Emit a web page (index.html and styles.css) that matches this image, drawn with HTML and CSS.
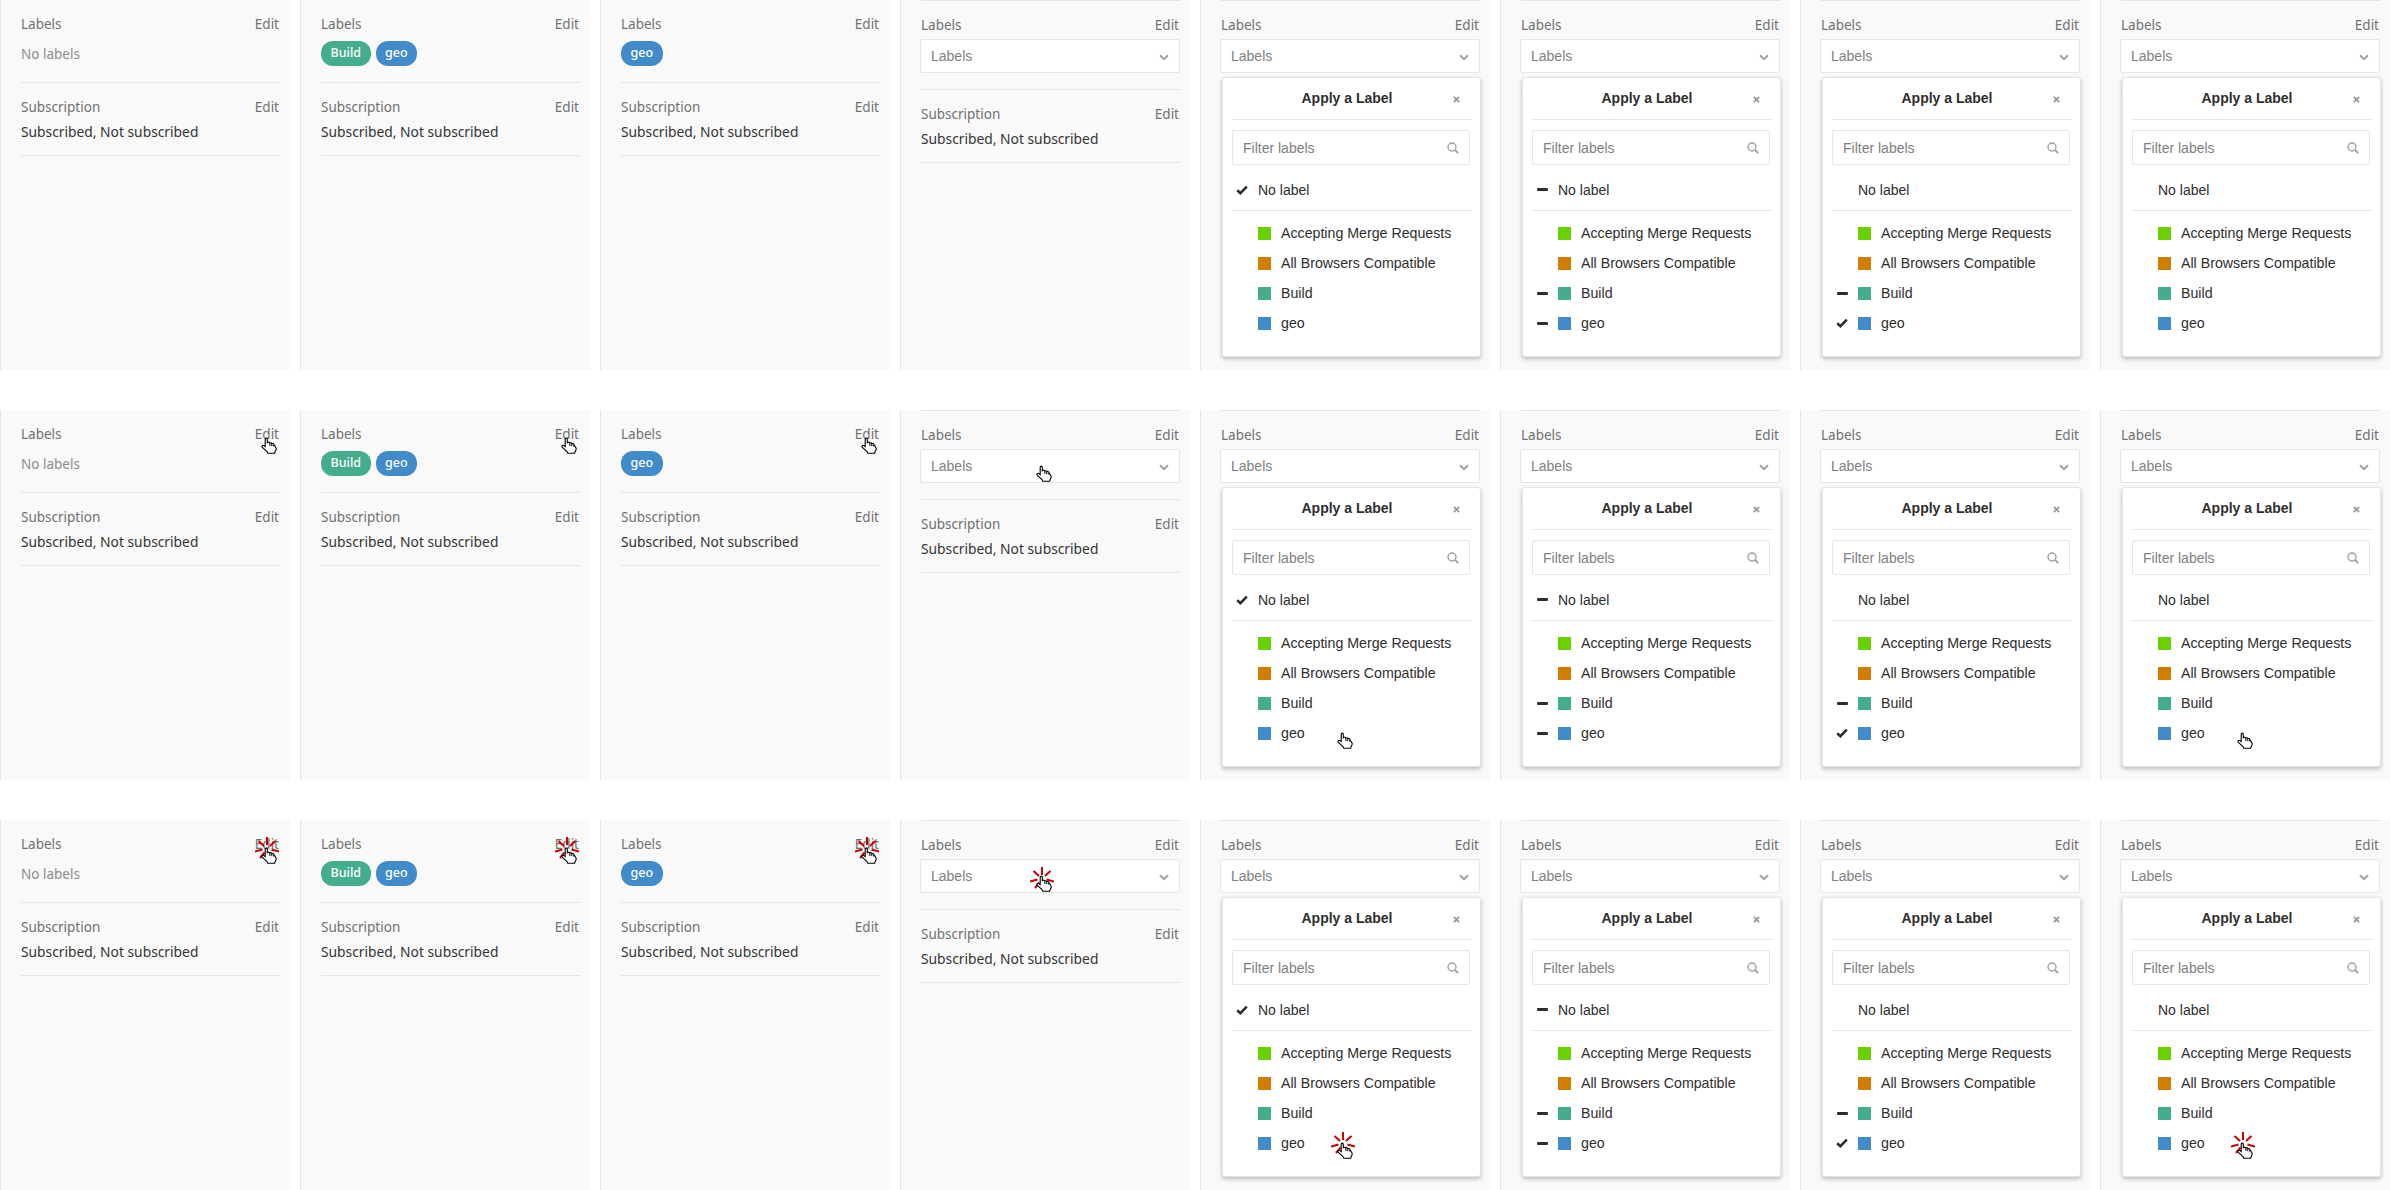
FILE: index.html
```html
<!DOCTYPE html>
<html>
<head>
    <title>Labels sidebar</title>
    <link rel="stylesheet" href="styles.css">
</head>
<body>
    <svg class="defs" width="0" height="0">
        <symbol id="hand" viewBox="0 0 16 17">
            <path d="M4.2 8V2.2C4.2 .7 6.3 .7 6.3 2.2V5.8L7 5.4C7.8 4.9 8.6 5.2 8.9 6C9.6 5.5 10.5 5.8 10.8 6.6C11.6 6.2 12.5 6.6 12.9 7.5L14.9 10.8C15.4 11.9 15.2 13 14.5 13.8L13.6 16.3H6.8L6 14.6L1.4 10.4C.3 9.2 1.8 7.7 3 8.6L4.2 9.6Z" fill="#fff" stroke="#000" stroke-width="1.1"/>
            <path d="M8.9 6.2V9M10.8 6.8V9.2M12.8 7.8V9.6" fill="none" stroke="#000" stroke-width="1"/>
        </symbol>
        <symbol id="burst" viewBox="0 0 24 24">
            <path d="M12 0V8M3.5 4L9 9M20.5 4L15 9M0 14.5L7.5 12.5M24 14.5L16.5 12.5M5 21L9.5 15.5M19 21L14.5 15.5" fill="none" stroke="#cc0000" stroke-width="2"/>
        </symbol>
        <symbol id="check" viewBox="0 0 12 10">
            <path d="M1.2 5.2L4.4 8.2L10.8 1.6" fill="none" stroke="#2e2e2e" stroke-width="2.6"/>
        </symbol>
        <symbol id="chevron" viewBox="0 0 10 7">
            <path d="M1 1.2L5 5.2L9 1.2" fill="none" stroke="#a0a0a0" stroke-width="2"/>
        </symbol>
        <symbol id="close" viewBox="0 0 8 8">
            <path d="M1 1L7 7M7 1L1 7" fill="none" stroke="#999" stroke-width="2"/>
        </symbol>
        <symbol id="search" viewBox="0 0 12 12">
            <circle cx="5" cy="5" r="4" fill="none" stroke="#a0a0a0" stroke-width="1.4"/>
            <path d="M8 8L11.2 11.2" fill="none" stroke="#a0a0a0" stroke-width="1.8"/>
        </symbol>
    </svg>

    <div class="board">
        <!-- row 1 -->
        <div class="panel">
            <div class="block"><div class="head"><span>Labels</span><a>Edit</a></div><div class="value muted">No labels</div></div>
            <div class="block sub"><div class="head"><span>Subscription</span><a>Edit</a></div><div class="value-sub">Subscribed, Not subscribed</div></div>
        </div>
        <div class="panel">
            <div class="block"><div class="head"><span>Labels</span><a>Edit</a></div><div class="value"><span class="pill build">Build</span><span class="pill geo">geo</span></div></div>
            <div class="block sub"><div class="head"><span>Subscription</span><a>Edit</a></div><div class="value-sub">Subscribed, Not subscribed</div></div>
        </div>
        <div class="panel">
            <div class="block"><div class="head"><span>Labels</span><a>Edit</a></div><div class="value"><span class="pill geo">geo</span></div></div>
            <div class="block sub"><div class="head"><span>Subscription</span><a>Edit</a></div><div class="value-sub">Subscribed, Not subscribed</div></div>
        </div>
        <div class="panel">
            <div class="block editing"><div class="head"><span>Labels</span><a>Edit</a></div><div class="select"><span>Labels</span><svg class="chevron"><use href="#chevron"/></svg></div></div>
            <div class="block sub"><div class="head"><span>Subscription</span><a>Edit</a></div><div class="value-sub">Subscribed, Not subscribed</div></div>
        </div>
        <div class="panel">
            <div class="block editing"><div class="head"><span>Labels</span><a>Edit</a></div><div class="select"><span>Labels</span><svg class="chevron"><use href="#chevron"/></svg>
                <div class="dropdown">
                    <div class="dd-title"><b>Apply a Label</b><svg class="close"><use href="#close"/></svg></div>
                    <div class="filter"><span>Filter labels</span><svg class="search"><use href="#search"/></svg></div>
                    <div class="dd-none"><i class="mark"><svg class="check"><use href="#check"/></svg></i>No label</div>
                    <ul class="dd-list">
                        <li><i class="mark"></i><i class="swatch green"></i>Accepting Merge Requests</li>
                        <li><i class="mark"></i><i class="swatch orange"></i>All Browsers Compatible</li>
                        <li><i class="mark"></i><i class="swatch build"></i>Build</li>
                        <li><i class="mark"></i><i class="swatch geo"></i>geo</li>
                    </ul>
                </div>
            </div></div>
        </div>
        <div class="panel">
            <div class="block editing"><div class="head"><span>Labels</span><a>Edit</a></div><div class="select"><span>Labels</span><svg class="chevron"><use href="#chevron"/></svg>
                <div class="dropdown">
                    <div class="dd-title"><b>Apply a Label</b><svg class="close"><use href="#close"/></svg></div>
                    <div class="filter"><span>Filter labels</span><svg class="search"><use href="#search"/></svg></div>
                    <div class="dd-none"><i class="mark"><i class="dash"></i></i>No label</div>
                    <ul class="dd-list">
                        <li><i class="mark"></i><i class="swatch green"></i>Accepting Merge Requests</li>
                        <li><i class="mark"></i><i class="swatch orange"></i>All Browsers Compatible</li>
                        <li><i class="mark"><i class="dash"></i></i><i class="swatch build"></i>Build</li>
                        <li><i class="mark"><i class="dash"></i></i><i class="swatch geo"></i>geo</li>
                    </ul>
                </div>
            </div></div>
        </div>
        <div class="panel">
            <div class="block editing"><div class="head"><span>Labels</span><a>Edit</a></div><div class="select"><span>Labels</span><svg class="chevron"><use href="#chevron"/></svg>
                <div class="dropdown">
                    <div class="dd-title"><b>Apply a Label</b><svg class="close"><use href="#close"/></svg></div>
                    <div class="filter"><span>Filter labels</span><svg class="search"><use href="#search"/></svg></div>
                    <div class="dd-none"><i class="mark"></i>No label</div>
                    <ul class="dd-list">
                        <li><i class="mark"></i><i class="swatch green"></i>Accepting Merge Requests</li>
                        <li><i class="mark"></i><i class="swatch orange"></i>All Browsers Compatible</li>
                        <li><i class="mark"><i class="dash"></i></i><i class="swatch build"></i>Build</li>
                        <li><i class="mark"><svg class="check"><use href="#check"/></svg></i><i class="swatch geo"></i>geo</li>
                    </ul>
                </div>
            </div></div>
        </div>
        <div class="panel">
            <div class="block editing"><div class="head"><span>Labels</span><a>Edit</a></div><div class="select"><span>Labels</span><svg class="chevron"><use href="#chevron"/></svg>
                <div class="dropdown">
                    <div class="dd-title"><b>Apply a Label</b><svg class="close"><use href="#close"/></svg></div>
                    <div class="filter"><span>Filter labels</span><svg class="search"><use href="#search"/></svg></div>
                    <div class="dd-none"><i class="mark"></i>No label</div>
                    <ul class="dd-list">
                        <li><i class="mark"></i><i class="swatch green"></i>Accepting Merge Requests</li>
                        <li><i class="mark"></i><i class="swatch orange"></i>All Browsers Compatible</li>
                        <li><i class="mark"></i><i class="swatch build"></i>Build</li>
                        <li><i class="mark"></i><i class="swatch geo"></i>geo</li>
                    </ul>
                </div>
            </div></div>
        </div>

        <!-- row 2: cursor hovering -->
        <div class="panel">
            <div class="block"><div class="head"><span>Labels</span><a>Edit</a></div><div class="value muted">No labels</div></div>
            <div class="block sub"><div class="head"><span>Subscription</span><a>Edit</a></div><div class="value-sub">Subscribed, Not subscribed</div></div>
            <svg class="hand at-edit"><use href="#hand"/></svg>
        </div>
        <div class="panel">
            <div class="block"><div class="head"><span>Labels</span><a>Edit</a></div><div class="value"><span class="pill build">Build</span><span class="pill geo">geo</span></div></div>
            <div class="block sub"><div class="head"><span>Subscription</span><a>Edit</a></div><div class="value-sub">Subscribed, Not subscribed</div></div>
            <svg class="hand at-edit"><use href="#hand"/></svg>
        </div>
        <div class="panel">
            <div class="block"><div class="head"><span>Labels</span><a>Edit</a></div><div class="value"><span class="pill geo">geo</span></div></div>
            <div class="block sub"><div class="head"><span>Subscription</span><a>Edit</a></div><div class="value-sub">Subscribed, Not subscribed</div></div>
            <svg class="hand at-edit"><use href="#hand"/></svg>
        </div>
        <div class="panel">
            <div class="block editing"><div class="head"><span>Labels</span><a>Edit</a></div><div class="select"><span>Labels</span><svg class="chevron"><use href="#chevron"/></svg></div></div>
            <div class="block sub"><div class="head"><span>Subscription</span><a>Edit</a></div><div class="value-sub">Subscribed, Not subscribed</div></div>
            <svg class="hand at-select"><use href="#hand"/></svg>
        </div>
        <div class="panel">
            <div class="block editing"><div class="head"><span>Labels</span><a>Edit</a></div><div class="select"><span>Labels</span><svg class="chevron"><use href="#chevron"/></svg>
                <div class="dropdown">
                    <div class="dd-title"><b>Apply a Label</b><svg class="close"><use href="#close"/></svg></div>
                    <div class="filter"><span>Filter labels</span><svg class="search"><use href="#search"/></svg></div>
                    <div class="dd-none"><i class="mark"><svg class="check"><use href="#check"/></svg></i>No label</div>
                    <ul class="dd-list">
                        <li><i class="mark"></i><i class="swatch green"></i>Accepting Merge Requests</li>
                        <li><i class="mark"></i><i class="swatch orange"></i>All Browsers Compatible</li>
                        <li><i class="mark"></i><i class="swatch build"></i>Build</li>
                        <li><i class="mark"></i><i class="swatch geo"></i>geo</li>
                    </ul>
                </div>
            </div></div>
            <svg class="hand at-geo"><use href="#hand"/></svg>
        </div>
        <div class="panel">
            <div class="block editing"><div class="head"><span>Labels</span><a>Edit</a></div><div class="select"><span>Labels</span><svg class="chevron"><use href="#chevron"/></svg>
                <div class="dropdown">
                    <div class="dd-title"><b>Apply a Label</b><svg class="close"><use href="#close"/></svg></div>
                    <div class="filter"><span>Filter labels</span><svg class="search"><use href="#search"/></svg></div>
                    <div class="dd-none"><i class="mark"><i class="dash"></i></i>No label</div>
                    <ul class="dd-list">
                        <li><i class="mark"></i><i class="swatch green"></i>Accepting Merge Requests</li>
                        <li><i class="mark"></i><i class="swatch orange"></i>All Browsers Compatible</li>
                        <li><i class="mark"><i class="dash"></i></i><i class="swatch build"></i>Build</li>
                        <li><i class="mark"><i class="dash"></i></i><i class="swatch geo"></i>geo</li>
                    </ul>
                </div>
            </div></div>
        </div>
        <div class="panel">
            <div class="block editing"><div class="head"><span>Labels</span><a>Edit</a></div><div class="select"><span>Labels</span><svg class="chevron"><use href="#chevron"/></svg>
                <div class="dropdown">
                    <div class="dd-title"><b>Apply a Label</b><svg class="close"><use href="#close"/></svg></div>
                    <div class="filter"><span>Filter labels</span><svg class="search"><use href="#search"/></svg></div>
                    <div class="dd-none"><i class="mark"></i>No label</div>
                    <ul class="dd-list">
                        <li><i class="mark"></i><i class="swatch green"></i>Accepting Merge Requests</li>
                        <li><i class="mark"></i><i class="swatch orange"></i>All Browsers Compatible</li>
                        <li><i class="mark"><i class="dash"></i></i><i class="swatch build"></i>Build</li>
                        <li><i class="mark"><svg class="check"><use href="#check"/></svg></i><i class="swatch geo"></i>geo</li>
                    </ul>
                </div>
            </div></div>
        </div>
        <div class="panel">
            <div class="block editing"><div class="head"><span>Labels</span><a>Edit</a></div><div class="select"><span>Labels</span><svg class="chevron"><use href="#chevron"/></svg>
                <div class="dropdown">
                    <div class="dd-title"><b>Apply a Label</b><svg class="close"><use href="#close"/></svg></div>
                    <div class="filter"><span>Filter labels</span><svg class="search"><use href="#search"/></svg></div>
                    <div class="dd-none"><i class="mark"></i>No label</div>
                    <ul class="dd-list">
                        <li><i class="mark"></i><i class="swatch green"></i>Accepting Merge Requests</li>
                        <li><i class="mark"></i><i class="swatch orange"></i>All Browsers Compatible</li>
                        <li><i class="mark"></i><i class="swatch build"></i>Build</li>
                        <li><i class="mark"></i><i class="swatch geo"></i>geo</li>
                    </ul>
                </div>
            </div></div>
            <svg class="hand at-geo"><use href="#hand"/></svg>
        </div>

        <!-- row 3: cursor clicking -->
        <div class="panel">
            <div class="block"><div class="head"><span>Labels</span><a>Edit</a></div><div class="value muted">No labels</div></div>
            <div class="block sub"><div class="head"><span>Subscription</span><a>Edit</a></div><div class="value-sub">Subscribed, Not subscribed</div></div>
            <svg class="hand at-edit"><use href="#hand"/></svg><svg class="burst at-edit"><use href="#burst"/></svg>
        </div>
        <div class="panel">
            <div class="block"><div class="head"><span>Labels</span><a>Edit</a></div><div class="value"><span class="pill build">Build</span><span class="pill geo">geo</span></div></div>
            <div class="block sub"><div class="head"><span>Subscription</span><a>Edit</a></div><div class="value-sub">Subscribed, Not subscribed</div></div>
            <svg class="hand at-edit"><use href="#hand"/></svg><svg class="burst at-edit"><use href="#burst"/></svg>
        </div>
        <div class="panel">
            <div class="block"><div class="head"><span>Labels</span><a>Edit</a></div><div class="value"><span class="pill geo">geo</span></div></div>
            <div class="block sub"><div class="head"><span>Subscription</span><a>Edit</a></div><div class="value-sub">Subscribed, Not subscribed</div></div>
            <svg class="hand at-edit"><use href="#hand"/></svg><svg class="burst at-edit"><use href="#burst"/></svg>
        </div>
        <div class="panel">
            <div class="block editing"><div class="head"><span>Labels</span><a>Edit</a></div><div class="select"><span>Labels</span><svg class="chevron"><use href="#chevron"/></svg></div></div>
            <div class="block sub"><div class="head"><span>Subscription</span><a>Edit</a></div><div class="value-sub">Subscribed, Not subscribed</div></div>
            <svg class="hand at-select"><use href="#hand"/></svg><svg class="burst at-select"><use href="#burst"/></svg>
        </div>
        <div class="panel">
            <div class="block editing"><div class="head"><span>Labels</span><a>Edit</a></div><div class="select"><span>Labels</span><svg class="chevron"><use href="#chevron"/></svg>
                <div class="dropdown">
                    <div class="dd-title"><b>Apply a Label</b><svg class="close"><use href="#close"/></svg></div>
                    <div class="filter"><span>Filter labels</span><svg class="search"><use href="#search"/></svg></div>
                    <div class="dd-none"><i class="mark"><svg class="check"><use href="#check"/></svg></i>No label</div>
                    <ul class="dd-list">
                        <li><i class="mark"></i><i class="swatch green"></i>Accepting Merge Requests</li>
                        <li><i class="mark"></i><i class="swatch orange"></i>All Browsers Compatible</li>
                        <li><i class="mark"></i><i class="swatch build"></i>Build</li>
                        <li><i class="mark"></i><i class="swatch geo"></i>geo</li>
                    </ul>
                </div>
            </div></div>
            <svg class="hand at-geo"><use href="#hand"/></svg><svg class="burst at-geo"><use href="#burst"/></svg>
        </div>
        <div class="panel">
            <div class="block editing"><div class="head"><span>Labels</span><a>Edit</a></div><div class="select"><span>Labels</span><svg class="chevron"><use href="#chevron"/></svg>
                <div class="dropdown">
                    <div class="dd-title"><b>Apply a Label</b><svg class="close"><use href="#close"/></svg></div>
                    <div class="filter"><span>Filter labels</span><svg class="search"><use href="#search"/></svg></div>
                    <div class="dd-none"><i class="mark"><i class="dash"></i></i>No label</div>
                    <ul class="dd-list">
                        <li><i class="mark"></i><i class="swatch green"></i>Accepting Merge Requests</li>
                        <li><i class="mark"></i><i class="swatch orange"></i>All Browsers Compatible</li>
                        <li><i class="mark"><i class="dash"></i></i><i class="swatch build"></i>Build</li>
                        <li><i class="mark"><i class="dash"></i></i><i class="swatch geo"></i>geo</li>
                    </ul>
                </div>
            </div></div>
        </div>
        <div class="panel">
            <div class="block editing"><div class="head"><span>Labels</span><a>Edit</a></div><div class="select"><span>Labels</span><svg class="chevron"><use href="#chevron"/></svg>
                <div class="dropdown">
                    <div class="dd-title"><b>Apply a Label</b><svg class="close"><use href="#close"/></svg></div>
                    <div class="filter"><span>Filter labels</span><svg class="search"><use href="#search"/></svg></div>
                    <div class="dd-none"><i class="mark"></i>No label</div>
                    <ul class="dd-list">
                        <li><i class="mark"></i><i class="swatch green"></i>Accepting Merge Requests</li>
                        <li><i class="mark"></i><i class="swatch orange"></i>All Browsers Compatible</li>
                        <li><i class="mark"><i class="dash"></i></i><i class="swatch build"></i>Build</li>
                        <li><i class="mark"><svg class="check"><use href="#check"/></svg></i><i class="swatch geo"></i>geo</li>
                    </ul>
                </div>
            </div></div>
        </div>
        <div class="panel">
            <div class="block editing"><div class="head"><span>Labels</span><a>Edit</a></div><div class="select"><span>Labels</span><svg class="chevron"><use href="#chevron"/></svg>
                <div class="dropdown">
                    <div class="dd-title"><b>Apply a Label</b><svg class="close"><use href="#close"/></svg></div>
                    <div class="filter"><span>Filter labels</span><svg class="search"><use href="#search"/></svg></div>
                    <div class="dd-none"><i class="mark"></i>No label</div>
                    <ul class="dd-list">
                        <li><i class="mark"></i><i class="swatch green"></i>Accepting Merge Requests</li>
                        <li><i class="mark"></i><i class="swatch orange"></i>All Browsers Compatible</li>
                        <li><i class="mark"></i><i class="swatch build"></i>Build</li>
                        <li><i class="mark"></i><i class="swatch geo"></i>geo</li>
                    </ul>
                </div>
            </div></div>
            <svg class="hand at-geo"><use href="#hand"/></svg><svg class="burst at-geo"><use href="#burst"/></svg>
        </div>
    </div>
</body>
</html>
```

FILE: styles.css
```css
body {
    margin: 0;
    background-color: #fff;
    font-family: "Noto Sans", Arial, sans-serif;
    font-size: 13.5px;
    overflow: hidden;
}

.defs {
    display: block;
    height: 0;
}

.board {
    display: grid;
    grid-template-columns: repeat(8, 290px);
    grid-template-rows: repeat(3, 370px);
    column-gap: 10px;
    row-gap: 40px;
}

.panel {
    position: relative;
    box-sizing: border-box;
    padding: 0 10px 0 20px;
    background-color: #f9f9f9;
    border-left: 1px solid #e5e5e5;
}

.block {
    padding: 14px 0 16px;
    border-bottom: 1px solid #e5e5e5;
}

.block.editing {
    border-top: 1px solid #e5e5e5;
}

.block.sub {
    padding-bottom: 13px;
}

.head {
    display: flex;
    justify-content: space-between;
    height: 20px;
    padding-right: 1px;
    line-height: 20px;
    color: #707070;
}

.value {
    display: flex;
    align-items: center;
    gap: 5px;
    height: 25px;
    margin-top: 7px;
}

.muted {
    color: #8c8c8c;
}

.value-sub {
    height: 20px;
    margin-top: 5px;
    line-height: 20px;
    font-size: 13.8px;
    color: #333;
}

.pill {
    height: 25px;
    padding: 0 9.5px;
    border-radius: 12px;
    line-height: 24px;
    font-size: 12.5px;
    font-weight: 500;
    color: #fff;
}

.build {
    background-color: #44ad8e;
}

.geo {
    background-color: #428bca;
}

.green {
    background-color: #69d100;
}

.orange {
    background-color: #d17d00;
}

.select {
    position: relative;
    display: flex;
    align-items: center;
    justify-content: space-between;
    box-sizing: border-box;
    height: 34px;
    margin: 4px 0 0 -1px;
    padding: 0 10px;
    background-color: #fff;
    border: 1px solid #e5e5e5;
    border-radius: 2px;
    font-family: "Liberation Sans", Arial, sans-serif;
    font-size: 14px;
    color: #808080;
}

.chevron {
    width: 10px;
    height: 7px;
    margin-top: 3px;
}

.dropdown {
    position: absolute;
    top: 37px;
    left: 1px;
    z-index: 2;
    box-sizing: border-box;
    width: 259px;
    height: 280px;
    padding: 0 8px 0 9px;
    background-color: #fff;
    border: 1px solid #e5e5e5;
    border-radius: 3px;
    box-shadow: 0 2px 4px rgba(0, 0, 0, 0.25);
    color: #2e2e2e;
}

.dd-title {
    position: relative;
    height: 41px;
    line-height: 41px;
    text-align: center;
    border-bottom: 1px solid #e5e5e5;
}

.dd-title b {
    margin-right: 10px;
}

.close {
    position: absolute;
    top: 18px;
    right: 12px;
    width: 7px;
    height: 7px;
}

.filter {
    display: flex;
    align-items: center;
    justify-content: space-between;
    box-sizing: border-box;
    width: 238px;
    height: 35px;
    margin-top: 10px;
    padding: 0 10px;
    border: 1px solid #e5e5e5;
    border-radius: 2px;
    color: #808080;
}

.search {
    width: 12px;
    height: 12px;
}

.dd-none {
    display: flex;
    align-items: center;
    height: 46px;
    padding: 4px 0 0 4px;
    box-sizing: border-box;
    border-bottom: 1px solid #e5e5e5;
}

.dd-list {
    list-style: none;
    margin: 0;
    padding: 7px 0 0 4px;
}

.dd-list li {
    display: flex;
    align-items: center;
    height: 30px;
    font-size: 14.2px;
}

.mark {
    display: flex;
    align-items: center;
    width: 22px;
    flex: none;
}

.check {
    width: 12px;
    height: 10px;
}

.dash {
    display: block;
    width: 11px;
    height: 3px;
    margin-left: 1px;
    background-color: #2e2e2e;
    border-radius: 1px;
}

.swatch {
    width: 13px;
    height: 13px;
    margin-right: 10px;
    flex: none;
}

/* cursor overlays */
.hand {
    position: absolute;
    z-index: 4;
    width: 16px;
    height: 17px;
}

.burst {
    position: absolute;
    z-index: 3;
    width: 24px;
    height: 24px;
}

.hand.at-edit {
    top: 27px;
    left: 260px;
}

.hand.at-select {
    top: 55px;
    left: 135px;
}

.hand.at-geo {
    top: 322px;
    left: 136px;
}

.burst.at-edit {
    top: 17px;
    left: 254px;
}

.burst.at-select {
    top: 47px;
    left: 129px;
}

.burst.at-geo {
    top: 312px;
    left: 130px;
}
```
